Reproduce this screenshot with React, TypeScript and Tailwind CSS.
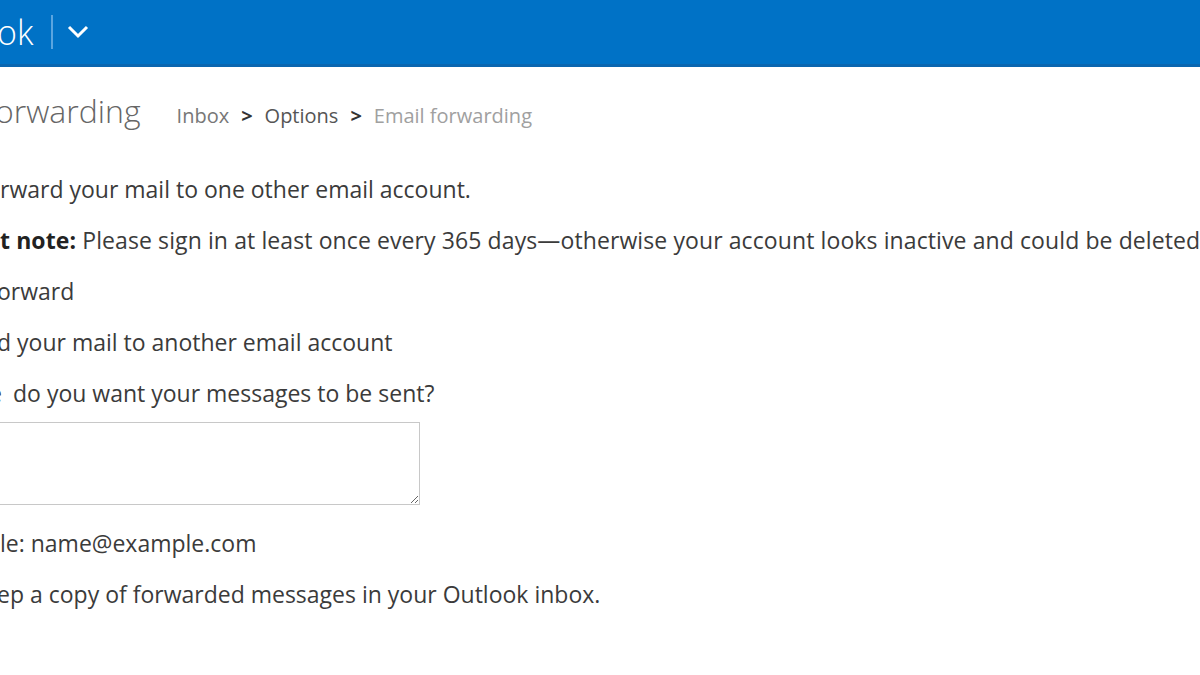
import type { ReactNode } from "react";

// the screenshot is a crop: the start of each line sits left of the window,
// so the hidden head of a line is pushed off to the left of its row
function Line({
  head,
  children,
  className = "",
  headClass = "",
}: {
  head: string;
  children: ReactNode;
  className?: string;
  headClass?: string;
}) {
  return (
    <div className={`flex h-[51px] items-center whitespace-nowrap ${className}`}>
      <span className={`flex w-0 justify-end ${headClass}`}>{head}</span>
      <span>{children}</span>
    </div>
  );
}

export default function App() {
  return (
    <div
      className="h-[675px] w-[1200px] overflow-hidden bg-white text-[#3b3b3b]"
      style={{ fontFamily: '"Open Sans", "Noto Sans", Arial, sans-serif' }}
    >
      <header className="flex h-[67px] items-center border-b-[3px] border-[#0a66b0] bg-[#0072c6] text-white">
        <div className="-ml-[3px] flex items-center whitespace-nowrap">
          <span className="flex w-0 justify-end text-[34px] font-light leading-none">Outlo</span>
          <span className="text-[34px] font-light leading-none">ok</span>
        </div>
        <div className="ml-[18px] h-[34px] w-[2px] bg-[#5aa5e0]" />
        <svg className="ml-[13px]" width="24" height="16" viewBox="0 0 24 16" fill="none">
          <path d="M3 3l9 9 9-9" stroke="white" strokeWidth="3" />
        </svg>
      </header>

      <div className="mt-[20px] flex items-baseline whitespace-nowrap">
        <div className="-ml-[5px] flex items-baseline">
          <span className="flex w-0 justify-end text-[32px] font-light text-[#666]">Email f</span>
          <span className="text-[32px] font-light text-[#666]">orwarding</span>
        </div>
        <nav className="ml-[36px] flex items-baseline gap-[12px] text-[20px]">
          <span className="text-[#777]">Inbox</span>
          <span className="font-bold text-[#333]">&gt;</span>
          <span className="text-[#555]">Options</span>
          <span className="font-bold text-[#333]">&gt;</span>
          <span className="text-[#a0a0a0]">Email forwarding</span>
        </nav>
      </div>

      <div className="mt-[29px] text-[23px]">
        <Line head="You can fo">rward your mail to one other email account.</Line>
        <Line head="Importan" className="tracking-[0.1px]">
          <b className="font-bold text-[#222]">t note:</b> Please sign in at least once every 365 days—otherwise your
          account looks inactive and could be deleted.
        </Line>
        <Line head="Don't f" className="-ml-[3px]">orward</Line>
        <Line head="Forwar" className="-ml-[3px]">d your mail to another email account</Line>
        <Line head="Where" className="pl-[2px]" headClass="mr-[11px]">
          do you want your messages to be sent?
        </Line>
        <textarea className="mt-[3px] -ml-[60px] block h-[83px] w-[480px] border border-[#c8c8c8] bg-white" />
        <Line head="Examp" className="mt-[13px]">le: name@example.com</Line>
        <Line head="Ke" className="-ml-[3px]">ep a copy of forwarded messages in your Outlook inbox.</Line>
      </div>
    </div>
  );
}
